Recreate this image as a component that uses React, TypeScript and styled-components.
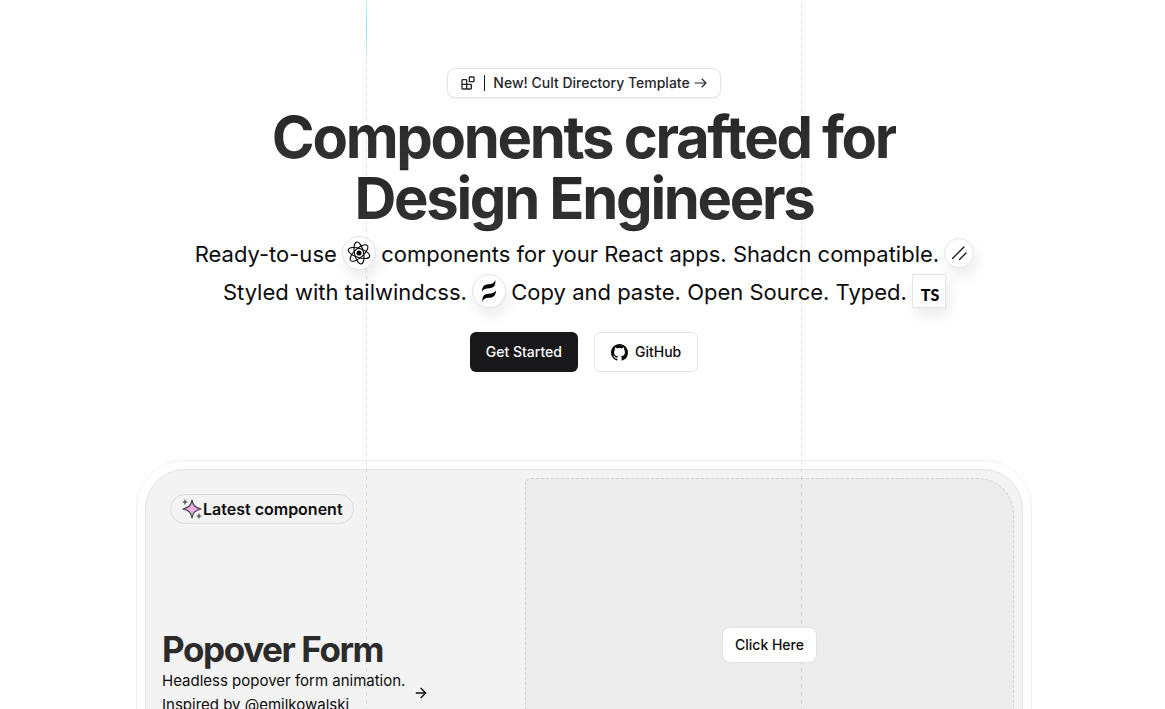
import React from "react";
import styled, { createGlobalStyle } from "styled-components";
import { ArrowRight } from "lucide-react";

const GlobalStyle = createGlobalStyle`
  *, *::before, *::after { box-sizing: border-box; }
  body {
    margin: 0;
    background: #fff;
    color: #0c0c0d;
    font-family: Inter, "Liberation Sans", sans-serif;
    -webkit-font-smoothing: antialiased;
  }
  h1, h2, p { margin: 0; }
  a { color: inherit; text-decoration: none; }
`;

const Page = styled.main`
  position: relative;
  display: flex;
  flex-direction: column;
  align-items: center;
  min-height: 100vh;
  overflow: hidden;
  padding: 68px 0 32px 3px;
`;

const GuideLines = styled.div`
  position: absolute;
  inset: 0 0 0 3px;
  display: flex;
  justify-content: center;
  gap: 434px;
  pointer-events: none;
`;

const Guide = styled.span`
  position: relative;
  width: 1px;
  background: repeating-linear-gradient(to bottom, transparent 0 4px, rgba(0, 0, 0, 0.1) 4px 8px);
`;

const Beam = styled.span`
  position: absolute;
  top: 0;
  left: 0;
  width: 1px;
  height: 66px;
  background: linear-gradient(to bottom, #b5f1fb, #8fe3f5 45%, rgba(190, 235, 250, 0));
`;

const Announcement = styled.a`
  position: relative;
  display: flex;
  align-items: center;
  gap: 8px;
  height: 30px;
  padding: 0 12px;
  border: 1px solid #e4e4e7;
  border-radius: 8px;
  background: #fff;
  box-shadow: 0 1px 2px rgba(0, 0, 0, 0.05);
  color: #27272a;
  font-size: 14px;
  line-height: 20px;
  font-weight: 500;
`;

const Divider = styled.span`
  width: 1px;
  height: 16px;
  background: #18181b;
`;

const AnnouncementText = styled.span`
  display: flex;
  align-items: center;
  gap: 4px;
`;

const Title = styled.h1`
  margin-top: 9px;
  padding-bottom: 4px;
  max-width: 720px;
  text-align: center;
  font-size: 58px;
  line-height: 61px;
  font-weight: 700;
  letter-spacing: -0.04em;
  color: transparent;
  background: linear-gradient(to bottom, #262626, #333) 0 0 / 100% 61px;
  background-clip: text;
  -webkit-background-clip: text;
`;

const Tagline = styled.p`
  margin-top: 2px;
  max-width: 800px;
  text-align: center;
  font-size: 22px;
  line-height: 38px;
`;

const TechBadge = styled.span<{ $size: number; $square?: boolean }>`
  position: relative;
  display: inline-flex;
  align-items: center;
  justify-content: center;
  vertical-align: middle;
  width: ${(p) => p.$size}px;
  height: ${(p) => p.$size}px;
  margin: -4px -1px 2px;
  border: 1px solid #e4e4e7;
  border-radius: ${(p) => (p.$square ? "0" : "50%")};
  background: #fff;
  box-shadow: 3px 8px 14px rgba(0, 0, 0, 0.08);
`;

const Actions = styled.div`
  display: flex;
  gap: 16px;
  margin-top: 21px;
`;

const Action = styled.a<{ $primary?: boolean }>`
  position: relative;
  display: flex;
  align-items: center;
  gap: 7px;
  height: 40px;
  padding: 0 16px;
  border: ${(p) => (p.$primary ? "0" : "1px solid #e4e4e7")};
  border-radius: 6px;
  background: ${(p) => (p.$primary ? "#18181b" : "#fff")};
  color: ${(p) => (p.$primary ? "#fafafa" : "#0c0c0d")};
  font-size: 14px;
  line-height: 20px;
  font-weight: 500;
`;

const Frame = styled.section`
  width: calc(100% - 32px);
  max-width: 896px;
  margin-top: 88px;
  padding: 8px;
  border: 1px solid #f1f1f1;
  border-radius: 48px;
`;

const Card = styled.div`
  display: grid;
  grid-template-columns: 22fr 29fr;
  padding: 8px;
  border: 1px solid #e4e4e4;
  border-radius: 40px;
  background: #f3f3f3;
`;

const CardInfo = styled.div`
  display: flex;
  flex-direction: column;
  align-items: flex-start;
  justify-content: space-between;
  padding: 16px 8px 95px;
`;

const Chip = styled.span`
  display: flex;
  align-items: center;
  height: 30px;
  margin-left: 8px;
  padding: 0 10px;
  border: 1px solid #dcdcdc;
  border-radius: 15px;
  font-size: 16px;
  line-height: 24px;
  font-weight: 600;
`;

const CardTitle = styled.h2`
  font-size: 35px;
  line-height: 40px;
  font-weight: 700;
  letter-spacing: -0.04em;
  color: #2b2b2b;
`;

const CardLink = styled.a`
  display: flex;
  align-items: center;
  gap: 8px;
  font-size: 15px;
  line-height: 24px;
`;

const Preview = styled.div`
  display: flex;
  align-items: center;
  justify-content: center;
  min-height: 334px;
  border: 1px dashed #d2d2d2;
  border-radius: 6px 36px 36px 6px;
  background: #ececec;
`;

const PreviewButton = styled.button`
  position: relative;
  height: 36px;
  padding: 0 12px;
  border: 1px solid #e2e2e2;
  border-radius: 8px;
  background: #fff;
  color: #0c0c0d;
  font: 500 14px/20px Inter, "Liberation Sans", sans-serif;
`;

const BlocksIcon = () => (
  <svg width="16" height="16" viewBox="0 0 24 24" fill="none" stroke="currentColor" strokeWidth="2" strokeLinecap="round" strokeLinejoin="round" aria-hidden="true">
    <rect x="14" y="3" width="7" height="7" rx="1" />
    <path d="M10 21V8a1 1 0 0 0-1-1H4a1 1 0 0 0-1 1v12a1 1 0 0 0 1 1h12a1 1 0 0 0 1-1v-5a1 1 0 0 0-1-1H3" />
  </svg>
);

const LongArrow = () => (
  <svg width="14" height="12" viewBox="0 0 14 12" fill="none" stroke="currentColor" strokeWidth="1.1" strokeLinecap="round" strokeLinejoin="round" aria-hidden="true">
    <path d="M1 6h11M8 2l4 4-4 4" />
  </svg>
);

const ReactLogo = () => (
  <svg width="26" height="26" viewBox="-13 -13 26 26" fill="none" stroke="#000" strokeWidth="1.1" role="img" aria-label="React">
    <circle r="2.500" fill="#000" stroke="none" />
    <g transform="rotate(18)">
      <ellipse rx="11.200" ry="4.500" />
      <ellipse rx="11.200" ry="4.500" transform="rotate(60)" />
      <ellipse rx="11.200" ry="4.500" transform="rotate(120)" />
    </g>
  </svg>
);

const ShadcnLogo = () => (
  <svg width="18" height="18" viewBox="0 0 18 18" fill="none" stroke="#111" strokeWidth="1.3" strokeLinecap="round" role="img" aria-label="shadcn">
    <path d="M2.500 14.500 14 3M9.500 15.500 16 9" />
  </svg>
);

const TailwindLogo = () => (
  <svg width="18" height="24" viewBox="0 0 18 24" fill="#000" role="img" aria-label="Tailwind">
    <path d="M2 12.500C2 7.500 4.500 5.300 8.500 5.200C12 5.100 14.300 4.200 15.300 1C16 6.500 13.600 9 9.500 9.200C5.800 9.400 3.500 9.800 2 12.500Z" />
    <path d="M2.500 23C1.800 17.300 4.200 15 8.400 14.800C12 14.600 14.500 14.100 16 11.500C15.900 16.600 13.300 18.700 9.300 18.800C5.700 18.900 3.400 19.700 2.500 23Z" />
  </svg>
);

const TsLabel = styled.span`
  align-self: flex-end;
  margin-left: 2px;
  font-family: Lato, "Liberation Sans", sans-serif;
  font-size: 16px;
  line-height: 24px;
  font-weight: 900;
  color: #000;
`;

const GithubLogo = () => (
  <svg width="17" height="17" viewBox="0 0 16 16" fill="currentColor" aria-hidden="true">
    <path d="M8 0C3.580 0 0 3.580 0 8c0 3.540 2.290 6.530 5.470 7.590.400.070.550-.170.550-.380 0-.190-.010-.820-.010-1.490-2.010.370-2.530-.490-2.690-.940-.090-.230-.480-.940-.820-1.130-.280-.150-.680-.520-.010-.530.630-.010 1.080.580 1.230.820.720 1.210 1.870.870 2.330.660.070-.520.280-.870.510-1.070-1.780-.200-3.640-.890-3.640-3.950 0-.870.310-1.590.820-2.150-.080-.200-.360-1.020.080-2.120 0 0 .670-.210 2.200.820.640-.180 1.320-.270 2-.270s1.360.090 2 .270c1.530-1.040 2.200-.820 2.200-.820.440 1.100.160 1.920.080 2.120.510.560.820 1.270.820 2.150 0 3.070-1.870 3.750-3.650 3.950.290.250.540.730.540 1.480 0 1.070-.010 1.930-.010 2.200 0 .210.150.460.550.380A8.010 8.010 0 0 0 16 8c0-4.420-3.580-8-8-8Z" />
  </svg>
);

const SparkleIcon = () => (
  <svg width="22" height="22" viewBox="0 0 22 22" fill="none" stroke="#3f3f46" strokeWidth="1.2" strokeLinejoin="round" strokeLinecap="round" aria-hidden="true">
    <path fill="#efaee0" d="M11 2C12 7.500 14 9.600 20 11C14 12.300 12 14.500 11 20C10 14.500 8 12.300 2 11C8 9.600 10 7.500 11 2Z" />
    <path d="M4 2v4M2 4h4M18 16v4M16 18h4" />
  </svg>
);

export default function App() {
  return (
    <Page>
      <GlobalStyle />
      <GuideLines aria-hidden="true">
        <Guide><Beam /></Guide>
        <Guide />
      </GuideLines>

      <Announcement href="#directory">
        <BlocksIcon />
        <Divider />
        <AnnouncementText>New! Cult Directory Template <LongArrow /></AnnouncementText>
      </Announcement>

      <Title>Components crafted for<br />Design Engineers</Title>

      <Tagline>
        Ready-to-use <TechBadge $size={34}><ReactLogo /></TechBadge> components for your React apps. Shadcn compatible.{" "}
        <TechBadge $size={30}><ShadcnLogo /></TechBadge>
        <br />
        Styled with tailwindcss. <TechBadge $size={34}><TailwindLogo /></TechBadge> Copy and paste. Open Source. Typed.{" "}
        <TechBadge $size={34} $square><TsLabel>TS</TsLabel></TechBadge>
      </Tagline>

      <Actions>
        <Action href="#start" $primary>Get Started</Action>
        <Action href="#github"><GithubLogo />GitHub</Action>
      </Actions>

      <Frame>
        <Card>
          <CardInfo>
            <Chip><SparkleIcon />Latest component</Chip>
            <div>
              <CardTitle>Popover Form</CardTitle>
              <CardLink href="#popover-form">
                <span>Headless popover form animation.<br />Inspired by @emilkowalski</span>
                <ArrowRight size={16} />
              </CardLink>
            </div>
          </CardInfo>
          <Preview>
            <PreviewButton type="button">Click Here</PreviewButton>
          </Preview>
        </Card>
      </Frame>
    </Page>
  );
}
